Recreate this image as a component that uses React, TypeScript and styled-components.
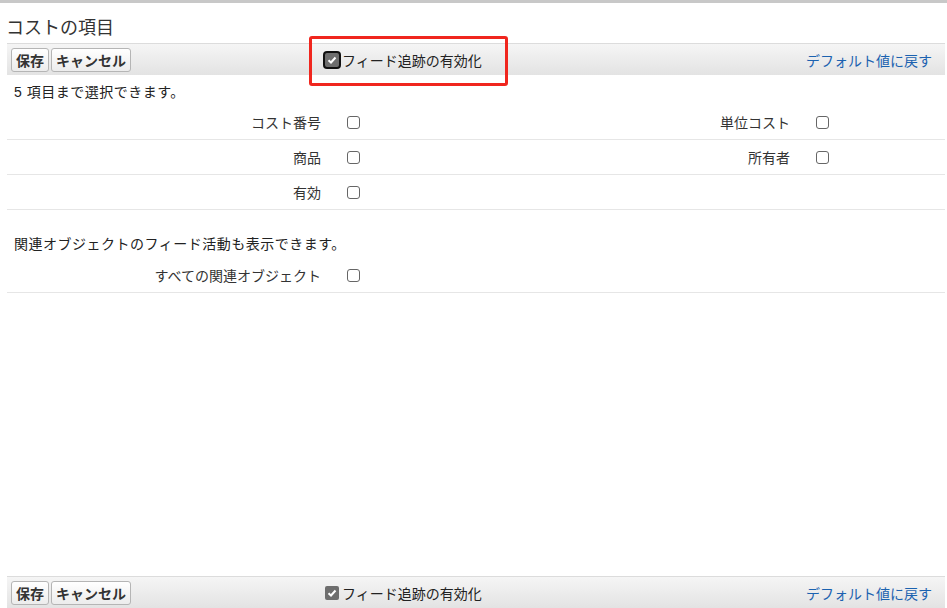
import styled, { createGlobalStyle } from "styled-components";

const Global = createGlobalStyle`
  html, body { margin: 0; padding: 0; background: #fff; }
  body { font-family: "Liberation Sans", "Noto Sans CJK JP", sans-serif; font-size: 13px; color: #222; }
`;

const Page = styled.div`
  height: 608px;
  display: flex;
  flex-direction: column;
  border-top: 3px solid #c8c8c8;
  box-sizing: border-box;
`;

const Title = styled.h2`
  margin: 0;
  padding: 10px 0 0 6px;
  height: 40px;
  box-sizing: border-box;
  font-size: 18px;
  font-weight: normal;
  color: #333;
`;

const Toolbar = styled.div`
  position: relative;
  margin: 0 2px 0 7px;
  height: 32px;
  display: flex;
  align-items: center;
  padding: 0 13px 0 4px;
  background: linear-gradient(#f5f5f5, #e3e3e3);
  border-top: 1px solid #dcdcdc;
  box-sizing: border-box;
`;

const Button = styled.button`
  font-family: inherit;
  font-size: 14px;
  font-weight: bold;
  color: #333;
  padding: 1px 4px;
  margin-right: 2px;
  background: linear-gradient(#fff, #ececec);
  border: 1px solid #b5b5b5;
  border-radius: 3px;
`;

const FeedToggle = styled.label`
  margin-left: 192px;
  display: flex;
  align-items: center;
  gap: 3px;
  font-size: 14px;
`;

const CheckedBox = styled.span<{ $outlined?: boolean }>`
  width: 14px;
  height: 14px;
  background: #6e6e6e;
  border-radius: 2px;
  display: inline-flex;
  align-items: center;
  justify-content: center;
  box-shadow: ${(p) => (p.$outlined ? "0 0 0 2px #111" : "none")};
`;

const Highlight = styled.div`
  position: absolute;
  left: 302px;
  top: -8px;
  width: 193px;
  height: 44px;
  border: 3px solid #f0261e;
  border-radius: 3px;
  pointer-events: none;
`;

const Link = styled.a`
  margin-left: auto;
  color: #1b62b0;
  font-size: 14px;
  text-decoration: none;
`;

const Note = styled.div<{ $top: number; $height: number }>`
  padding: ${(p) => p.$top}px 0 0 14px;
  height: ${(p) => p.$height}px;
  box-sizing: border-box;
  font-size: 14px;
  letter-spacing: 0.5px;
`;

const Grid = styled.div`
  margin: 0 2px 0 7px;
  display: grid;
  grid-template-columns: 314px 159px 310px 1fr;
`;

const Cell = styled.div<{ $label?: boolean }>`
  height: 34px;
  display: flex;
  align-items: center;
  justify-content: ${(p) => (p.$label ? "flex-end" : "flex-start")};
  padding-left: ${(p) => (p.$label ? 0 : 26)}px;
  border-bottom: 1px solid #e6e6e6;
  font-size: 14px;
  color: #333;
`;

const Box = styled.span`
  width: 11px;
  height: 11px;
  border: 1px solid #666;
  border-radius: 3px;
  display: inline-block;
`;

const Spacer = styled.div`
  flex: 1;
`;

const Check = () => (
  <svg width="10" height="10" viewBox="0 0 10 10">
    <path d="M1.5 5.2 L4 7.5 L8.5 2.5" stroke="#fff" strokeWidth="2" fill="none" />
  </svg>
);

function Bar({ highlight }: { highlight?: boolean }) {
  return (
    <Toolbar>
      <Button>保存</Button>
      <Button>キャンセル</Button>
      <FeedToggle>
        <CheckedBox $outlined={highlight}>
          <Check />
        </CheckedBox>
        フィード追跡の有効化
      </FeedToggle>
      <Link>デフォルト値に戻す</Link>
      {highlight && <Highlight />}
    </Toolbar>
  );
}

export default function App() {
  return (
    <>
      <Global />
      <Page>
        <Title>コストの項目</Title>
        <Bar highlight />
        <Note $top={6} $height={30}>5 項目まで選択できます。</Note>
        <Grid>
          <Cell $label>コスト番号</Cell>
          <Cell><Box /></Cell>
          <Cell $label>単位コスト</Cell>
          <Cell><Box /></Cell>
          <Cell $label>商品</Cell>
          <Cell><Box /></Cell>
          <Cell $label>所有者</Cell>
          <Cell><Box /></Cell>
          <Cell $label>有効</Cell>
          <Cell><Box /></Cell>
          <Cell />
          <Cell />
        </Grid>
        <Note $top={23} $height={48}>関連オブジェクトのフィード活動も表示できます。</Note>
        <Grid>
          <Cell $label>すべての関連オブジェクト</Cell>
          <Cell><Box /></Cell>
          <Cell />
          <Cell />
        </Grid>
        <Spacer />
        <Bar />
      </Page>
    </>
  );
}
